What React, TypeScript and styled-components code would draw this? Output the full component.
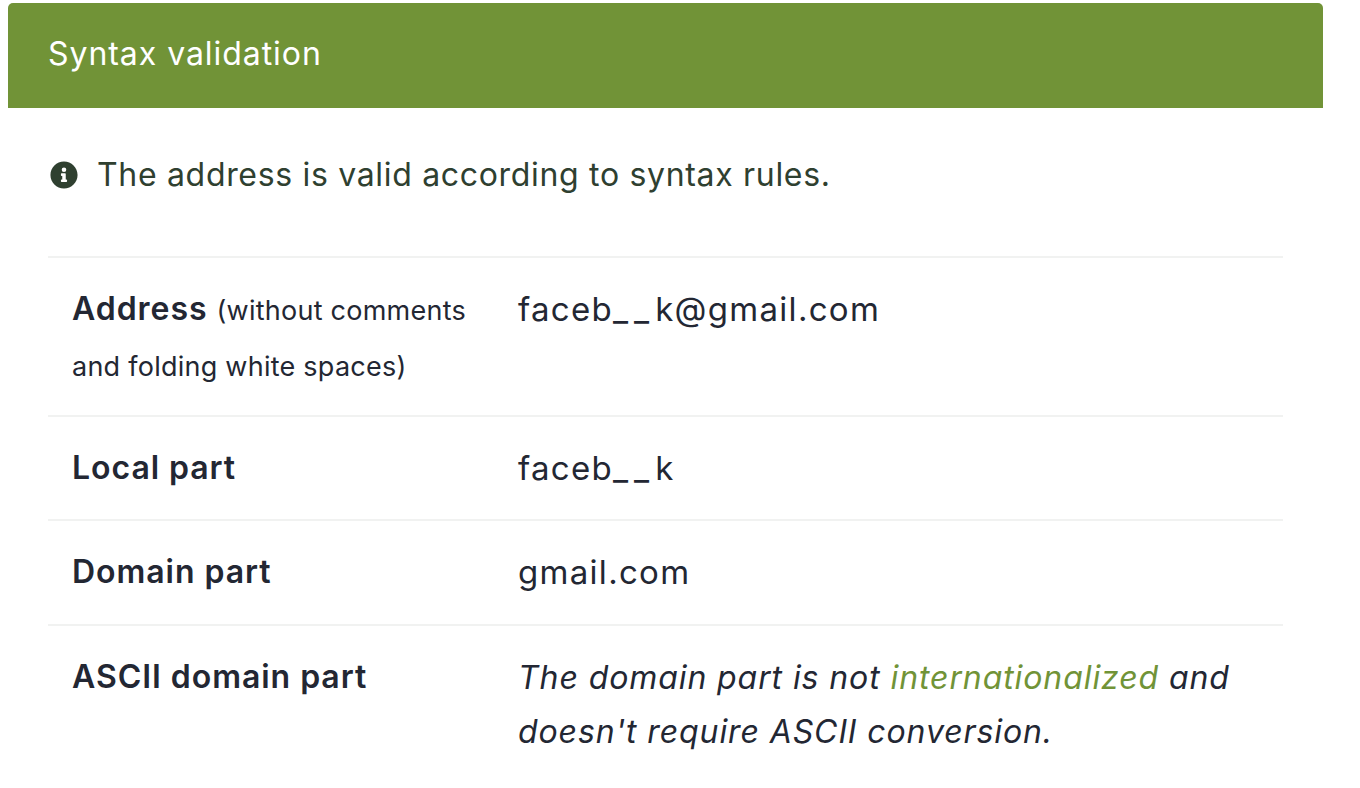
import React from 'react';
import styled, { createGlobalStyle } from 'styled-components';

const GlobalStyle = createGlobalStyle`
  html, body {
    margin: 0;
    padding: 0;
    background: #fff;
    overflow: hidden;
  }
  body {
    font-family: 'Inter', 'Noto Sans', sans-serif;
  }
`;

const Page = styled.div`
  padding: 3px 37px 0 8px;
  height: 785px;
  overflow: hidden;
`;

const Card = styled.section`
  background: #fff;
`;

const CardHeader = styled.h2`
  margin: 0;
  height: 105px;
  box-sizing: border-box;
  padding: 0 40px 5px;
  display: flex;
  align-items: center;
  background: #719337;
  border-radius: 5px 5px 0 0;
  color: #fff;
  font-size: 32px;
  font-weight: 400;
  letter-spacing: 0.95px;
`;

const CardBody = styled.div`
  padding: 47px 40px 0;
`;

const Notice = styled.p`
  margin: 0 0 60px;
  padding-bottom: 2px;
  box-sizing: border-box;
  display: flex;
  align-items: center;
  gap: 19px;
  height: 41px;
  color: #2f4030;
  font-size: 32px;
  letter-spacing: 0.68px;
`;

const InfoIcon = styled.svg`
  width: 28px;
  height: 28px;
  margin-left: 2px;
  flex: none;
`;

const Table = styled.table`
  width: 100%;
  border-collapse: collapse;
  table-layout: fixed;
  color: #232733;
  border-top: 2px solid #f1f2f1;
`;

const Row = styled.tr<{ $height: number }>`
  height: ${({ $height }) => $height}px;
  border-bottom: 2px solid #f1f2f1;
  &:last-child {
    border-bottom: none;
  }
`;

const Label = styled.th`
  width: 446px;
  box-sizing: border-box;
  padding: 24px 0 0 24px;
  text-align: left;
  vertical-align: top;
  font-size: 32px;
  font-weight: 600;
  line-height: 54px;
  letter-spacing: 0.95px;
`;

const Hint = styled.span`
  font-size: 27px;
  font-weight: 400;
  letter-spacing: 0.25px;
`;

const Value = styled.td`
  padding: 24px 24px 0 24px;
  vertical-align: top;
  font-size: 33px;
  line-height: 54px;
  letter-spacing: 1.3px;
`;

const Blank = styled.span`
  letter-spacing: 6px;
`;

const Note = styled.em`
  font-style: italic;
  font-size: 32px;
  letter-spacing: 0.9px;
  line-height: 53px;
`;

const DocLink = styled.a`
  color: #719337;
  text-decoration: none;
`;

export default function App() {
  return (
    <>
      <GlobalStyle />
      <Page>
        <Card>
          <CardHeader>Syntax validation</CardHeader>
          <CardBody>
            <Notice>
              <InfoIcon viewBox="0 0 512 512" aria-hidden="true">
                <path
                  fill="#2f4030"
                  d="M256 8C119 8 8 119 8 256s111 248 248 248 248-111 248-248S393 8 256 8zm0 110a42 42 0 1 1 0 84 42 42 0 0 1 0-84zm56 254c0 7-5 12-12 12h-88c-7 0-12-5-12-12v-24c0-7 5-12 12-12h12v-64h-12c-7 0-12-5-12-12v-24c0-7 5-12 12-12h64c7 0 12 5 12 12v100h12c7 0 12 5 12 12v24z"
                />
              </InfoIcon>
              The address is valid according to syntax rules.
            </Notice>
            <Table>
              <tbody>
                <Row $height={159}>
                  <Label>
                    Address <Hint>(without comments and folding white spaces)</Hint>
                  </Label>
                  <Value>
                    faceb<Blank>__</Blank>k@gmail.com
                  </Value>
                </Row>
                <Row $height={104}>
                  <Label>Local part</Label>
                  <Value>
                    faceb<Blank>__</Blank>k
                  </Value>
                </Row>
                <Row $height={105}>
                  <Label>Domain part</Label>
                  <Value>gmail.com</Value>
                </Row>
                <Row $height={160}>
                  <Label>ASCII domain part</Label>
                  <Value>
                    <Note>
                      The domain part is not <DocLink href="#">internationalized</DocLink> and
                      doesn't require ASCII conversion.
                    </Note>
                  </Value>
                </Row>
              </tbody>
            </Table>
          </CardBody>
        </Card>
      </Page>
    </>
  );
}
